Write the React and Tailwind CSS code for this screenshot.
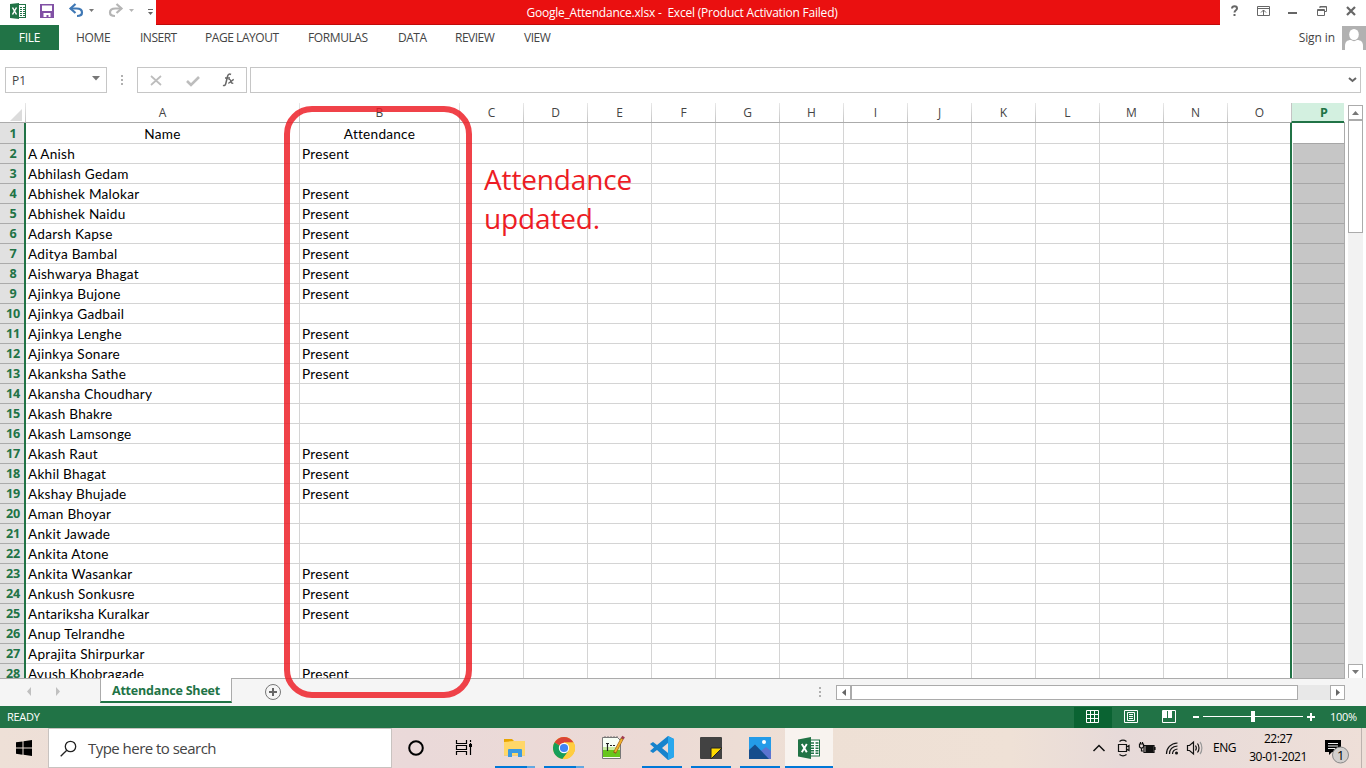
const Lines = [
  ['A Anish', 1], ['Abhilash Gedam', 0], ['Abhishek Malokar', 1], ['Abhishek Naidu', 1], ['Adarsh Kapse', 1],
  ['Aditya Bambal', 1], ['Aishwarya Bhagat', 1], ['Ajinkya Bujone', 1], ['Ajinkya Gadbail', 0], ['Ajinkya Lenghe', 1],
  ['Ajinkya Sonare', 1], ['Akanksha Sathe', 1], ['Akansha Choudhary', 0], ['Akash Bhakre', 0], ['Akash Lamsonge', 0],
  ['Akash Raut', 1], ['Akhil Bhagat', 1], ['Akshay Bhujade', 1], ['Aman Bhoyar', 0], ['Ankit Jawade', 0],
  ['Ankita Atone', 0], ['Ankita Wasankar', 1], ['Ankush Sonkusre', 1], ['Antariksha Kuralkar', 1], ['Anup Telrandhe', 0],
  ['Aprajita Shirpurkar', 0], ['Ayush Khobragade', 1],
];
const COLS = 'CDEFGHIJKLMNO'.split('');

function ExcelIcon({ className }) {
  return (
    <svg className={className} viewBox="0 0 22 22">
      <rect x="11" y="3" width="10.5" height="16" fill="#fff" stroke="#217346" strokeWidth="1" />
      <path d="M13 6h3M17.5 6h3M13 8.6h3M17.5 8.6h3M13 11.2h3M17.5 11.2h3M13 13.8h3M17.5 13.8h3M13 16.3h3M17.5 16.3h3" stroke="#217346" strokeWidth="1.4" />
      <path d="M0 2.5L13 0v22L0 19.5z" fill="#217346" />
      <path d="M3.8 7l5 8.2M8.8 7l-5 8.2" stroke="#fff" strokeWidth="1.9" />
    </svg>
  );
}

function TitleBar() {
  return (
    <div className="flex h-[25px]">
      <div className="flex w-[156px] shrink-0">
        <svg width="156" height="25" viewBox="0 0 156 25">
          <rect x="18.500" y="4.500" width="7" height="13" fill="#fff" stroke="#217346" />
          <path d="M20 7.500h2M23 7.500h2M20 9.500h2M23 9.500h2M20 11.500h2M23 11.500h2M20 13.500h2M23 13.500h2M20 15.500h2M23 15.500h2" stroke="#217346" />
          <path d="M10 4l9-1v16l-9-1z" fill="#217346" />
          <path d="M12.500 7.500l4 7M16.500 7.500l-4 7" stroke="#fff" strokeWidth="1.500" />
          <path d="M40 4h14v14H40z" fill="#8151a5" />
          <path d="M42 5.500h10v5.500H42zM43.500 13h7v4h-2v-2h-2v2h-3z" fill="#fff" />
          <path d="M70.500 8.500h6c4 0 5.500 2 5.500 4 0 2.300-1.500 3.500-5 3.500" fill="none" stroke="#3f78b5" strokeWidth="2.200" />
          <path d="M75.500 4l-5 4.500 5 4.500" fill="none" stroke="#3f78b5" strokeWidth="2.200" />
          <path d="M89 9h5l-2.500 3z" fill="#777" />
          <path d="M131.500 8.500" />
          <path d="M121.500 8.500h-6c-4 0-5.500 2-5.500 4 0 2.300 1.500 3.500 5 3.500" fill="none" stroke="#b5b5b5" strokeWidth="2.200" />
          <path d="M127 4" />
          <path d="M116.500 4l5 4.500-5 4.500" fill="none" stroke="#b5b5b5" strokeWidth="2.200" />
          <path d="M129 9h5l-2.500 3z" fill="#b5b5b5" />
          <path d="M148 9.500h5" stroke="#666" />
          <path d="M148 12h5l-2.500 3z" fill="#666" />
        </svg>
      </div>
      <div className="flex w-[1064px] items-center justify-center whitespace-pre border-b border-[#c00a0a] bg-[#ea1010] pr-[12px] pt-[2px] text-[12px] tracking-[-0.21px] text-white">
        {'Google_Attendance.xlsx -  Excel (Product Activation Failed)'}
      </div>
      <svg width="146" height="25" viewBox="0 0 146 25" fill="none" stroke="#666">
        <path d="M12 8.500c.2-3 5-3 5 0 0 2-2.500 1.500-2.500 4M14.500 14v2" strokeWidth="2" />
        <path d="M37.500 6.500h12v9h-12zM37.500 8.500h12M43.500 15v-5M41 12.500l2.500-2.500 2.500 2.500" />
        <path d="M68 13h9" strokeWidth="2" />
        <path d="M100 8V6.500h6.500v5H105" />
        <path d="M99.500 7h7M97.500 9.500h7v6h-7zM97.500 10.500h7" />
        <path d="M127 7l8 8M135 7l-8 8" strokeWidth="2.200" />
      </svg>
    </div>
  );
}

function Ribbon() {
  return (
    <div className="flex h-[42px] text-[12px] text-[#444]">
      <div className="flex h-[25px] w-[59px] items-center justify-center bg-[#217346] tracking-[-0.2px] text-white">FILE</div>
      <div className="flex h-[25px] grow items-center whitespace-nowrap">
        <span className="ml-[17px] w-[64px] tracking-[-0.35px]">HOME</span>
        <span className="w-[65px] tracking-[-0.5px]">INSERT</span>
        <span className="w-[103px] tracking-[-0.45px]">PAGE LAYOUT</span>
        <span className="w-[90px] tracking-[-0.4px]">FORMULAS</span>
        <span className="w-[57px] tracking-[-0.5px]">DATA</span>
        <span className="w-[69px] tracking-[-0.5px]">REVIEW</span>
        <span className="tracking-[-0.5px]">VIEW</span>
        <span className="ml-auto mr-[7px] tracking-[-0.1px]">Sign in</span>
        <svg width="24" height="24" viewBox="0 0 24 24">
          <path d="M0 0h24v24H0z" fill="#b1b1b1" />
          <ellipse cx="12" cy="8.500" rx="4.800" ry="5.500" fill="#fff" />
          <path d="M3 24v-4c0-4 2-6 6-6 2 1.500 4 1.500 6 0 4 0 6 2 6 6v4z" fill="#fff" />
        </svg>
      </div>
    </div>
  );
}

function FormulaBar() {
  return (
    <div className="flex h-[26px] pl-[5px]">
      <div className="flex w-[102px] items-center border border-[#c6c6c6] pl-[6px] text-[12px] text-[#444]">
        <span className="grow pt-[2px]">P1</span>
        <svg width="8" height="5" className="mb-[3px] mr-[6px]"><path d="M0 0h8L4 4.500z" fill="#777" /></svg>
      </div>
      <svg width="30" height="26"><path d="M14 8h2v2h-2zM14 12h2v2h-2zM14 16h2v2h-2z" fill="#b0b0b0" /></svg>
      <div className="flex w-[110px] border border-[#c6c6c6]">
        <svg width="108" height="24" fill="none" stroke="#bdbdbd">
          <path d="M13 8l10 9M23 8l-10 9" strokeWidth="1.700" />
          <path d="M49 13l4 4 8-8" strokeWidth="2.600" />
          <path d="M93 6.500c-1.800-1-3 0-3.500 2l-1.700 7c-.5 2-1.500 2.500-2.800 1.800M87 10h5" stroke="#666" strokeWidth="1.500" />
          <path d="M90.500 11.500c2-.8 2 1 2.600 2.500.4 1.300 1 1.500 2.200 1M95.800 11.500c-1.500 0-4 4-5.600 3.700" stroke="#666" strokeWidth="1.300" />
        </svg>
      </div>
      <div className="ml-[3px] flex w-[1111px] items-center justify-end border border-[#c6c6c6] pr-[3px]">
        <svg width="9" height="6"><path d="M1 1l3.500 3L8 1" fill="none" stroke="#666" strokeWidth="2" /></svg>
      </div>
    </div>
  );
}

const sep = 'flex shrink-0 items-center justify-center bg-[linear-gradient(#e8e8e8,#c4c4c4)] bg-[length:1px_100%] bg-right bg-no-repeat pt-px pr-px';

function HeaderRow() {
  return (
    <div className="flex h-[20px] border-b border-[#ababab] text-[12px] text-[#444]">
      <div className="flex w-[26px] shrink-0 items-end justify-end bg-[linear-gradient(#e8e8e8,#c4c4c4)] bg-[length:1px_100%] bg-right bg-no-repeat pb-px pr-[4px]">
        <svg width="12" height="12"><path d="M12 0v12H0z" fill="#dcdcdc" /></svg>
      </div>
      <div className={sep + ' w-[274px]'}>A</div>
      <div className={sep + ' w-[160px]'}>B</div>
      {COLS.map((c) => <div key={c} className={sep + ' w-[64px]'}>{c}</div>)}
      <div className="-mb-px ml-[-1px] flex w-[53px] items-center justify-center border-b-2 border-l border-b-[#217346] border-l-[#c4c4c4] bg-[#d3f0e0] pl-[12px] pt-[2px] text-[12.5px] font-bold text-[#217346]">P</div>
    </div>
  );
}

function Row({ n, name, mark, first, last }) {
  const h = first ? 'h-[21px]' : last ? 'h-[14px]' : 'h-[20px]';
  const line = last ? '' : ' border-b border-[#d4d4d4]';
  const inner = 'h-[19px] shrink-0 ' + (first ? 'leading-[22px]' : 'leading-[20px]');
  const just = first ? ' pr-[2px] text-center' : '';
  return (
    <div className={'flex shrink-0 overflow-hidden ' + h}>
      <div className={'w-[24px] shrink-0 bg-[#e1e1e1] pl-[2px] text-center font-[Open_Sans] text-[12.6px] font-bold tracking-[-0.3px] text-[#217346]' + (last ? '' : ' border-b border-[#ababab]')}>
        <div className={inner}>{n}</div>
      </div>
      <div className="w-[2px] shrink-0 bg-[#217346]" />
      <div className={'w-[274px] shrink-0 whitespace-nowrap border-r border-r-[#d4d4d4] pl-[2px]' + line}><div className={inner + just}>{name}</div></div>
      <div className={'w-[160px] shrink-0 border-r border-r-[#d4d4d4] pl-[2px]' + line}><div className={inner + just}>{mark}</div></div>
      {COLS.map((c) => (
        <div key={c} className={'shrink-0 ' + (c === 'O' ? 'w-[62px]' : 'w-[64px] border-r border-r-[#d4d4d4]') + line} />
      ))}
      <div className="w-[2px] shrink-0 bg-[#217346]" />
      <div className={'ml-px w-[52px] shrink-0 border-r border-r-[#ababab]' + (first ? ' bg-white' : ' bg-[#c6c6c6]') + (last ? '' : ' border-b border-b-[#a6a6a6]')} />
    </div>
  );
}

function VScroll() {
  return (
    <div className="ml-[3px] mt-[2px] flex h-[574px] w-[15px] flex-col bg-[#f2f2f2]">
      <div className="flex h-[15px] items-center justify-center border border-[#ababab] bg-white"><svg width="7" height="4"><path d="M0 4h7L3.500 0z" fill="#777" /></svg></div>
      <div className="h-[113px] border border-[#ababab] bg-white" />
      <div className="mt-auto flex h-[15px] shrink-0 items-center justify-center border border-[#ababab] bg-white"><svg width="7" height="4"><path d="M0 0h7L3.500 4z" fill="#777" /></svg></div>
    </div>
  );
}

function SheetTabs() {
  return (
    <div className="flex h-[28px] bg-[#f5f5f5]">
      <div className="w-[100px] border-t border-[#ababab]">
        <svg width="100" height="26"><path d="M31 8v9l-4-4.500zM56 8v9l4-4.500z" fill="#c0c0c0" /></svg>
      </div>
      <div className="flex h-[25px] w-[132px] items-center justify-center whitespace-nowrap border-x border-b-2 border-x-[#ababab] border-b-[#217346] bg-white pt-[3px] text-[12.5px] font-bold tracking-[-0.19px] text-[#217346]">Attendance Sheet</div>
      <div className="flex w-[1113px] border-t border-[#ababab]">
        <svg width="604" height="26" fill="none">
          <circle cx="41" cy="13" r="7.500" stroke="#777" /><path d="M37 13h8M41 9v8" stroke="#666" strokeWidth="2" />
          <path d="M587 8h2v2h-2zM587 12h2v2h-2zM587 16h2v2h-2z" fill="#b0b0b0" />
        </svg>
        <div className="mt-[6px] flex h-[15px] w-[509px] bg-[#e8e8e8]">
          <div className="flex w-[15px] items-center justify-center border border-[#ababab] bg-white"><svg width="4" height="7"><path d="M4 0v7L0 3.500z" fill="#666" /></svg></div>
          <div className="w-[447px] border border-[#ababab] bg-white" />
          <div className="ml-auto flex w-[15px] items-center justify-center border border-[#ababab] bg-white"><svg width="4" height="7"><path d="M0 0v7l4-3.500z" fill="#666" /></svg></div>
        </div>
      </div>
    </div>
  );
}

function StatusBar() {
  return (
    <div className="flex h-[22px] items-center bg-[#217346] pl-[7px] text-[11px] text-white">
      <span className="w-[1067px] tracking-[-0.3px]">READY</span>
      <svg width="250" height="22" viewBox="0 0 250 22" fill="none" stroke="#fff">
        <path d="M0 1h38v21H0z" fill="#0a6332" stroke="none" />
        <path d="M12.500 4.500h12v12h-12zM16.500 4v13M20.500 4v13M12 8.500h13M12 12.500h13" />
        <path d="M50.500 4.500h13v12h-13zM53.500 6.500h7v8h-7zM55 8.500h4M55 10.500h4M55 12.500h4" />
        <path d="M88.500 4.500h13v12h-13z" />
        <path d="M89 5h4v7h-4zM94 5h4v7h-4z" fill="#fff" stroke="none" />
        <path d="M119 11h6M233 11h8M237 7v8" strokeWidth="2" />
        <path d="M129 10.500h100" />
        <path d="M177 5h4v11h-4z" fill="#fff" stroke="none" />
      </svg>
      <span className="ml-[6px] tracking-[-0.3px]">100%</span>
    </div>
  );
}

function Taskbar() {
  return (
    <div className="flex h-[40px] bg-[linear-gradient(90deg,#eee0d7_0%,#ead9d9_30%,#ecdad5_48%,#eee0d5_60%,#efe1d6_74%,#e7dad9_82%,#eedfd8_100%)] text-black">
      <div className="flex w-[48px] items-center justify-center">
        <svg width="16" height="16"><path d="M0 2.300l6.500-.9v6.100H0zM7.500 1.200L16 0v7.500H7.500zM0 8.500h6.500v6.200L0 13.800zM7.500 8.500H16V16l-8.500-1.200z" /></svg>
      </div>
      <div className="flex w-[344px] items-center border border-[#c8c3c0] bg-white text-[15px] text-[#444]">
        <svg width="17" height="17" className="ml-[11px] mr-[11px]" fill="none" stroke="#222" strokeWidth="1.300"><circle cx="10.500" cy="6.500" r="5.200" /><path d="M6.800 10.200L.7 16.300" /></svg>
        <span className="tracking-[-0.53px]">Type here to search</span>
      </div>
      <svg width="393" height="40" viewBox="392 0 393 40">
        <circle cx="416" cy="20" r="6.800" fill="none" stroke="#000" strokeWidth="2" />
        <path d="M456.500 12v3.500h10V12M456.500 27v-3.500h10V27M456.500 17.500h10v4h-10zM470.500 12v2M470.500 15v12" fill="none" stroke="#000" strokeWidth="1.200" />
        <path d="M469 16h3v3h-3z" />
        <path d="M504 11h8l2 2h11v16h-21z" fill="#e8a500" />
        <path d="M504 14l10-1h11v13a1 1 0 01-1 1h-19a1 1 0 01-1-1z" fill="#ffd768" />
        <path d="M504 26h21v1.500h-21z" fill="#ffd768" />
        <path d="M504 27.500h21V30h-21z" fill="#ebdad7" />
        <path d="M508 29v-7a1 1 0 011-1h12a1 1 0 011 1v7h-4v-4h-6v4z" fill="#3b9ae1" />
        <circle cx="564" cy="20" r="11" fill="#fbc116" />
        <path d="M564 20L554.500 14.500a11 11 0 0119 0H564z" fill="#db4437" />
        <path d="M564 20l-9.500-5.500A11 11 0 00562.500 31l6-8z" fill="#169e5a" />
        <path d="M573.500 14.500H564v5.500l4.500 3-6 8a11 11 0 0011-16.500z" fill="#ffcd40" />
        <circle cx="564" cy="20" r="5.200" fill="#fff" /><circle cx="564" cy="20" r="4.100" fill="#4285f4" />
        <path d="M602.500 9.500h15l3 3v18h-18z" fill="#f8fff5" stroke="#777" />
        <path d="M603 19h17v4h-17z" fill="#c9eda0" /><path d="M603 22h17v7h-17z" fill="#67c61c" />
        <path d="M605 8v2M608 8v2M611 8v2M614 8v2M617 8v2" stroke="#777" />
        <path d="M607.500 15v8M606 15.500h3M610 17.500h2M613 17.500h2" stroke="#222" strokeWidth="1.200" />
        <path d="M622.500 10l-8 15" stroke="#8f5318" strokeWidth="3" /><path d="M622 11l-7 13" stroke="#efb02c" strokeWidth="2" /><path d="M623.500 8.500l-1 2" stroke="#a33c55" strokeWidth="3" />
        <path d="M668 8l6 3v18l-6 3-11-10-4 3-3-2 4-3.500-4-3.500 3-2 4 3z" fill="#1683cd" />
        <path d="M668 8l6 3v18l-6 3z" fill="#29a7ed" /><path d="M668 15v10l-6-5z" fill="#ecdad5" />
        <rect x="700" y="9" width="22" height="22" rx="1" fill="#424242" />
        <path d="M711 31V20h11z" fill="#ffdb00" stroke="#222" /><path d="M711.500 31l10.500-10.500V30a1 1 0 01-1 1z" fill="#424242" />
        <path d="M749 9h22v22h-22z" fill="#249be8" />
        <path d="M758 25l8-6 5 4v8h-13z" fill="#5c74d0" /><path d="M749 22l6-5.500 14 14.500h-20z" fill="#164d8c" />
        <circle cx="764" cy="14" r="2" fill="#fff" />
        <path d="M495 38h32v2h-32zM544 38h32v2h-32zM642 38h40v2h-40zM691 38h40v2h-40zM740 38h40v2h-40z" fill="#0078d7" />
        <path d="M527 38h8v2h-8zM576 38h8v2h-8z" fill="#62a8e2" />
      </svg>
      <div className="flex w-[48px] items-center justify-center border-b-2 border-[#0078d7] bg-[#f8f3ef]"><ExcelIcon className="mt-[2px] h-[22px] w-[22px]" /></div>
      <svg width="379" height="40" viewBox="833 0 379 40" fill="none" stroke="#111" strokeWidth="1.200">
        <path d="M1093.500 23l5.500-5.500 5.500 5.500" strokeWidth="1.500" />
        <path d="M1118.500 16.500h8v7h-8zM1126.500 19l2.500-1.500v5l-2.500-1.500M1119.500 13.500c2-1.500 5-1.500 7 0M1119.500 26.500c2 1.500 5 1.500 7 0" />
        <path d="M1144 17.500h10v7h-10zM1155 19v3" /><path d="M1146 18.500h7v5h-7z" fill="#111" /><path d="M1139.500 16h4v3l-2 1.500-2-1.500zM1140.500 14v2M1142.500 14v2M1141.500 20v3h2" />
        <path d="M1166.500 26c0-6 4-10.500 11-11M1169.500 26c0-5 3-7.500 8-8M1172.500 26c0-3 2-4.500 5-5" /><circle cx="1176.500" cy="25" r="1.500" fill="#111" stroke="none" />
        <path d="M1187.500 17.500h2l4-3.500v12l-4-3.500h-2zM1195.500 17.500c1 1.500 1 3.500 0 5M1197.500 15.500c2 2.500 2 6.500 0 9" /><path d="M1200 14c2.500 3 2.500 9 0 12" stroke="#999" />
      </svg>
      <span className="w-[26px] pl-px pt-[11px] text-[12px] tracking-[-0.45px]">ENG</span>
      <div className="ml-[6px] w-[68px] whitespace-nowrap pt-[2px] text-center text-[12px] leading-[18px] tracking-[-0.5px]"><div>22:27</div><div>30-01-2021</div></div>
      <svg width="54" height="40" viewBox="1312 0 54 40">
        <path d="M1325 12h16v12h-9l-3 3v-3h-4z" /><path d="M1328 15.500h10M1328 18h10M1328 20.500h7" stroke="#eee" />
        <circle cx="1340.500" cy="27" r="8" fill="#d2cfcd" stroke="#888" /><text x="1337" y="31.500" fontSize="13" fontFamily="Open Sans">1</text>
        <path d="M1361.500 0v40" stroke="#bdb2ae" />
      </svg>
    </div>
  );
}

export default function App() {
  return (
    <div className="relative flex h-[768px] w-[1366px] flex-col overflow-hidden bg-white font-['Open_Sans',sans-serif]">
      <TitleBar />
      <Ribbon />
      <FormulaBar />
      <div className="mt-[10px] flex h-[575px]">
        <div className="flex w-[1345px] shrink-0 flex-col">
          <HeaderRow />
          <div className="flex flex-col font-[Lato,sans-serif] text-[13.6px] tracking-[0.25px] text-black">
            <Row n={1} name="Name" mark="Attendance" first />
            {Lines.map(([name, p], i) => <Row key={name} n={i + 2} name={name} mark={p ? 'Present' : ''} last={i === 26} />)}
          </div>
        </div>
        <VScroll />
      </div>
      <SheetTabs />
      <StatusBar />
      <Taskbar />
      <div className="absolute left-[284px] top-[106px] h-[592px] w-[188px] rounded-[28px] border-[6px] border-[#ed1c24] opacity-[0.83]" />
      <div className="absolute left-[484px] top-[160px] text-[28px] leading-[39px] tracking-[-0.15px] text-[#ed1c24]">Attendance<br />updated.</div>
    </div>
  );
}
